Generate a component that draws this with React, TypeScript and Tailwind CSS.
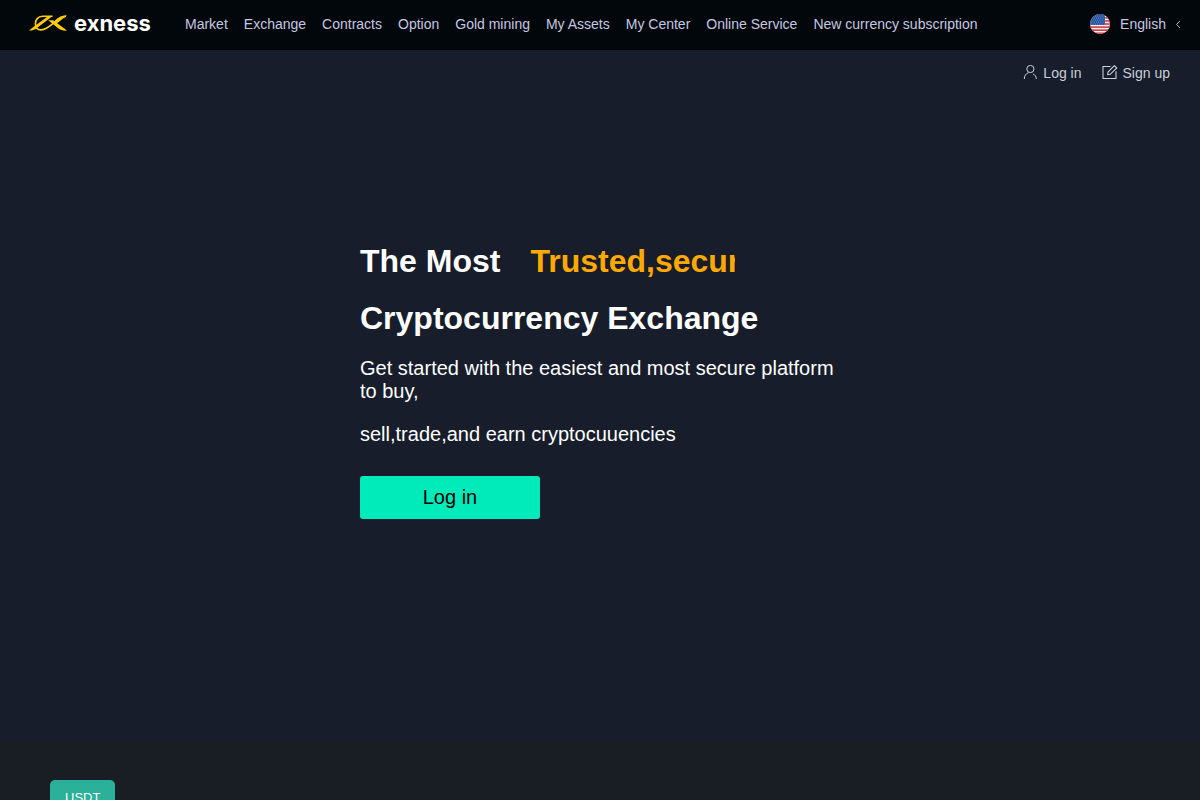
import React from "react";

interface NavItem {
  label: string;
  href: string;
}

const navItems: NavItem[] = [
  { label: "Market", href: "#market" },
  { label: "Exchange", href: "#exchange" },
  { label: "Contracts", href: "#contracts" },
  { label: "Option", href: "#option" },
  { label: "Gold mining", href: "#gold-mining" },
  { label: "My Assets", href: "#assets" },
  { label: "My Center", href: "#center" },
  { label: "Online Service", href: "#service" },
  { label: "New currency subscription", href: "#subscription" },
];

const Logo = () => (
  <a href="#home" className="flex w-[120px] items-center gap-[7px] pb-[1px] text-white">
    <svg className="shrink-0" width="38" height="16" viewBox="0 0 38 16" fill="none" aria-hidden="true">
      <path d="M0 15.6L5 11.6L18.6 1.4H23L8 13C5.6 14.8 3.4 15.6 0 15.6Z" fill="#fecb09" />
      <path
        d="M23.5 1.3H13.5C8.8 1.3 6.4 5 6.4 8.8C6.4 12.6 8.6 14.9 12 14.9C18 14.9 22.6 9.8 27.4 5.6C30.2 3.2 32.8 1.5 37 1.3"
        stroke="#fecb09"
        strokeWidth="1.6"
      />
      <path d="M26.4 5.2C30 1.8 33 .6 38 .6L27.4 8.8L24 8.4Z" fill="#fecb09" />
      <path d="M19 5.2H24.2L38 15.6C33.8 15.8 31.4 15 28.8 13L23 8.2C21.6 7 20.6 6.2 19 5.2Z" fill="#fecb09" />
    </svg>
    <span className="font-[family-name:Inter,sans-serif] text-[22px] leading-6 font-bold">exness</span>
  </a>
);

const stripes = [0, 1, 2, 3, 4, 5, 6];
const starRows = [2, 4, 6, 8, 10];

const Flag = () => (
  <svg width="20" height="20" viewBox="0 0 20 20" aria-hidden="true">
    <clipPath id="flag-clip">
      <circle cx="10" cy="10" r="10" />
    </clipPath>
    <g clipPath="url(#flag-clip)">
      <rect width="20" height="20" fill="#f7eeee" />
      {stripes.map((i) => (
        <rect key={i} y={i * 3.08} width="20" height="1.54" fill="#d43239" />
      ))}
      <rect width="15" height="11" fill="#1c4f9f" />
      {starRows.map((y, row) =>
        stripes.map((col) => (
          <circle key={`${y}-${col}`} cx={1 + col * 2.2 + (row % 2)} cy={y} r="0.5" fill="#a9c1e4" />
        ))
      )}
    </g>
  </svg>
);

const Header = () => (
  <header className="flex min-h-[50px] items-center border-b border-black bg-[#02070b] pr-5 pb-[2px] pl-[29px] text-sm text-[#c5c8e0]">
    <Logo />
    <nav className="ml-9 flex flex-1 items-center gap-4 whitespace-nowrap">
      {navItems.map((item) => (
        <a key={item.label} href={item.href} className="hover:text-white">
          {item.label}
        </a>
      ))}
    </nav>
    <button type="button" className="flex items-center">
      <Flag />
      <span className="ml-[10px]">English</span>
      <svg className="ml-[10px]" width="4" height="8" viewBox="0 0 4 8" fill="none" stroke="currentColor" aria-hidden="true">
        <path d="M4 .8L.6 4.4L4 8" strokeWidth="0.9" />
      </svg>
    </button>
  </header>
);

const AccountLinks = () => (
  <div className="flex justify-end gap-5 px-[30px] pt-[13px] text-sm text-[#c9cedb]">
    <a href="#login" className="flex items-center gap-[6px]">
      <svg width="14" height="16" viewBox="0 0 14 16" fill="none" stroke="currentColor" aria-hidden="true">
        <circle cx="7.4" cy="4" r="3.6" />
        <path d="M1.3 14C1.3 10.8 2.8 8.6 5.6 7.6M10 8.9C12 9.8 13.3 11.5 13.3 14" />
      </svg>
      Log in
    </a>
    <a href="#signup" className="flex items-center gap-[5px]">
      <svg width="16" height="16" viewBox="0 0 16 16" fill="none" stroke="currentColor" aria-hidden="true">
        <path d="M8.5 1.5H1V13.5H14V6.2" strokeWidth="1.1" />
        <path d="M12.4 .6L14.8 3L8.2 9.3L5.7 9.6L6 7.1Z" strokeWidth="1.1" />
      </svg>
      Sign up
    </a>
  </div>
);

const Hero = () => (
  <section className="min-h-[692px] bg-[#171d2a] text-white">
    <AccountLinks />
    <div className="mx-auto max-w-[480px] pt-40 pb-20">
      <h1 className="text-[32px] leading-9 font-bold">
        <span className="flex">
          The Most
          <span className="ml-[30px] w-[205px] overflow-hidden whitespace-nowrap text-[#ffa900]">Trusted,secure</span>
        </span>
        <span className="mt-[21px] block">Cryptocurrency Exchange</span>
      </h1>
      <p className="mt-[21px] text-xl leading-[23px]">Get started with the easiest and most secure platform to buy,</p>
      <p className="mt-5 text-xl leading-[23px]">sell,trade,and earn cryptocuuencies</p>
      <button type="button" className="mt-[30px] h-[43px] w-[180px] rounded-[3px] bg-[#00eaba] pb-[2px] text-xl text-black">
        Log in
      </button>
    </div>
  </section>
);

const Markets = () => (
  <section className="px-[50px] pt-[38px]">
    <button type="button" className="rounded-[5px] bg-[#2bb19a] px-[15px] py-2 text-[13px] leading-5 text-white">
      USDT
    </button>
  </section>
);

const App = () => (
  <div className="min-h-screen bg-[#191d24] font-[family-name:'Liberation_Sans',Arial,sans-serif]">
    <Header />
    <main>
      <Hero />
      <Markets />
    </main>
  </div>
);

export default App;
